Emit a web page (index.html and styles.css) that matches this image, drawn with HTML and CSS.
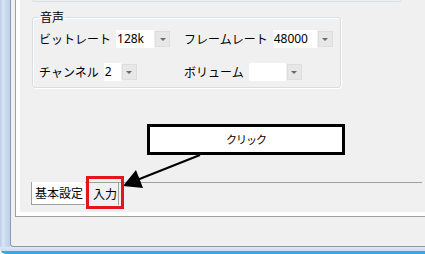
FILE: index.html
```html
<!DOCTYPE html>
<html lang="ja">
<head>
<meta charset="utf-8">
<title>音声設定</title>
<link rel="stylesheet" href="styles.css">
</head>
<body>
<div class="window">
  <div class="client">
    <div class="tabctrl">
      <div class="page">
        <div class="prev-group"></div>
        <fieldset class="group">
          <legend class="group-title">音声</legend>
          <div class="grid">
            <div class="field">
              <span class="label">ビットレート</span>
              <span class="combo"><span class="edit e-bitrate">128k</span><span class="drop"></span></span>
            </div>
            <div class="field">
              <span class="label">フレームレート</span>
              <span class="combo"><span class="edit e-frame">48000</span><span class="drop"></span></span>
            </div>
            <div class="field">
              <span class="label">チャンネル</span>
              <span class="combo"><span class="edit e-channel">2</span><span class="drop"></span></span>
            </div>
            <div class="field">
              <span class="label">ボリューム</span>
              <span class="combo"><span class="edit e-volume"></span><span class="drop"></span></span>
            </div>
          </div>
        </fieldset>
        <div class="spacer"></div>
        <div class="tabstrip">
          <div class="tab tab-active">基本設定</div>
          <div class="tab tab-input">入力</div>
          <div class="tab-fill"></div>
        </div>
      </div>
    </div>
  </div>
  <div class="callout">クリック</div>
  <svg class="arrow" width="425" height="254" viewBox="0 0 425 254">
    <line x1="200" y1="155" x2="137" y2="180" stroke="#000" stroke-width="2"/>
    <polygon points="123,186 136,170 143,188" fill="#000"/>
  </svg>
  <div class="highlight"></div>
</div>
</body>
</html>
```
FILE: styles.css
```css
html, body {
  margin: 0;
  padding: 0;
  width: 425px;
  height: 254px;
  overflow: hidden;
  background: #ffffff;
}

.window {
  position: relative;
  width: 425px;
  height: 254px;
  box-sizing: border-box;
  padding: 0 0 7px 10px;
  font-family: "Noto Sans CJK JP", "Noto Sans", sans-serif;
  color: #000;
  background:
    linear-gradient(to bottom, #dbe8f4 0, #c4def2 55%, #3ea8e4 60%, #3aa3e2 100%) left bottom / 100% 7px no-repeat,
    linear-gradient(to right, #b7cde6 0, #d9e6f4 30%, #c7d9ed 60%, #bcd1e9 100%) left top / 10px 100% no-repeat;
  border-bottom-left-radius: 6px;
}

.client {
  height: 246px;
  border-left: 1px solid #8c9aaa;
  border-bottom: 1px solid #8c9aaa;
  border-bottom-left-radius: 3px;
  background: #f0f0f0;
  padding-left: 4px;
}

.tabctrl {
  height: 216px;
  border-left: 1px solid #a0a0a0;
  border-bottom: 1px solid #a0a0a0;
}

.page {
  height: 212px;
  border-left: 4px solid #ffffff;
  border-bottom: 4px solid #ffffff;
  background: #f0f0f0;
  display: flex;
  flex-direction: column;
}

.prev-group {
  flex: none;
  margin-left: 12px;
  width: 367px;
  height: 1px;
  border: 1px solid #d5dfe5;
  border-top: 0;
  border-radius: 0 0 3px 3px;
}

.group {
  flex: none;
  margin: 7px 0 0 12px;
  padding: 5px 0 6px 6px;
  width: 309px;
  box-sizing: border-box;
  min-width: 0;
  border: 1px solid #d5dfe5;
  border-radius: 3px;
  box-shadow: inset 1px 1px 0 #ffffff, 1px 1px 0 #ffffff;
}

.group-title {
  padding: 0 1px;
  font-size: 12px;
  line-height: 16px;
}

.grid {
  display: grid;
  grid-template-columns: 145px auto;
  row-gap: 15px;
}

.field {
  display: flex;
  align-items: center;
  gap: 5px;
  height: 18px;
}

.label {
  font-size: 12px;
  line-height: 18px;
  white-space: nowrap;
}

.combo {
  display: flex;
  align-items: center;
  gap: 1px;
}

.edit {
  display: block;
  height: 18px;
  box-sizing: border-box;
  padding-left: 1px;
  background: #ffffff;
  font-family: "Noto Sans", sans-serif;
  font-size: 12px;
  line-height: 18px;
  color: #000;
}

.e-bitrate { width: 38px; }
.e-frame { width: 44px; }
.e-channel { width: 17px; }
.e-volume { width: 37px; }

.drop {
  display: flex;
  align-items: center;
  justify-content: center;
  width: 15px;
  height: 16px;
  box-sizing: border-box;
  background: #e7e7e7;
  border: 1px solid #dedede;
}

.drop::after {
  content: "";
  width: 0;
  height: 0;
  border-left: 3px solid transparent;
  border-right: 3px solid transparent;
  border-top: 3px solid #6a6a6a;
  margin-top: 1px;
}

.spacer {
  flex: 1;
}

.tabstrip {
  flex: none;
  display: flex;
  margin: 0 0 7px 11px;
  width: 391px;
  height: 23px;
}

.tab {
  box-sizing: border-box;
  height: 23px;
  font-size: 12px;
  line-height: 21px;
  white-space: nowrap;
}

.tab-active {
  background: #ffffff;
  border-left: 1px solid #a0a0a0;
  border-bottom: 1px solid #a0a0a0;
  padding: 0 2px 0 3px;
}

.tab-input {
  border-top: 1px solid #a0a0a0;
  border-right: 1px solid #a0a0a0;
  padding: 0 1px 0 8px;
}

.tab-fill {
  flex: 1;
  border-top: 1px solid #a0a0a0;
}

.callout {
  position: absolute;
  left: 147px;
  top: 124px;
  width: 198px;
  height: 31px;
  box-sizing: border-box;
  border: 3px solid #000;
  background: #ffffff;
  font-size: 11px;
  letter-spacing: -1px;
  line-height: 25px;
  text-align: center;
}

.arrow {
  position: absolute;
  left: 0;
  top: 0;
}

.highlight {
  position: absolute;
  left: 86px;
  top: 176px;
  width: 38px;
  height: 33px;
  box-sizing: border-box;
  border: 3px solid #e5141c;
}
```
